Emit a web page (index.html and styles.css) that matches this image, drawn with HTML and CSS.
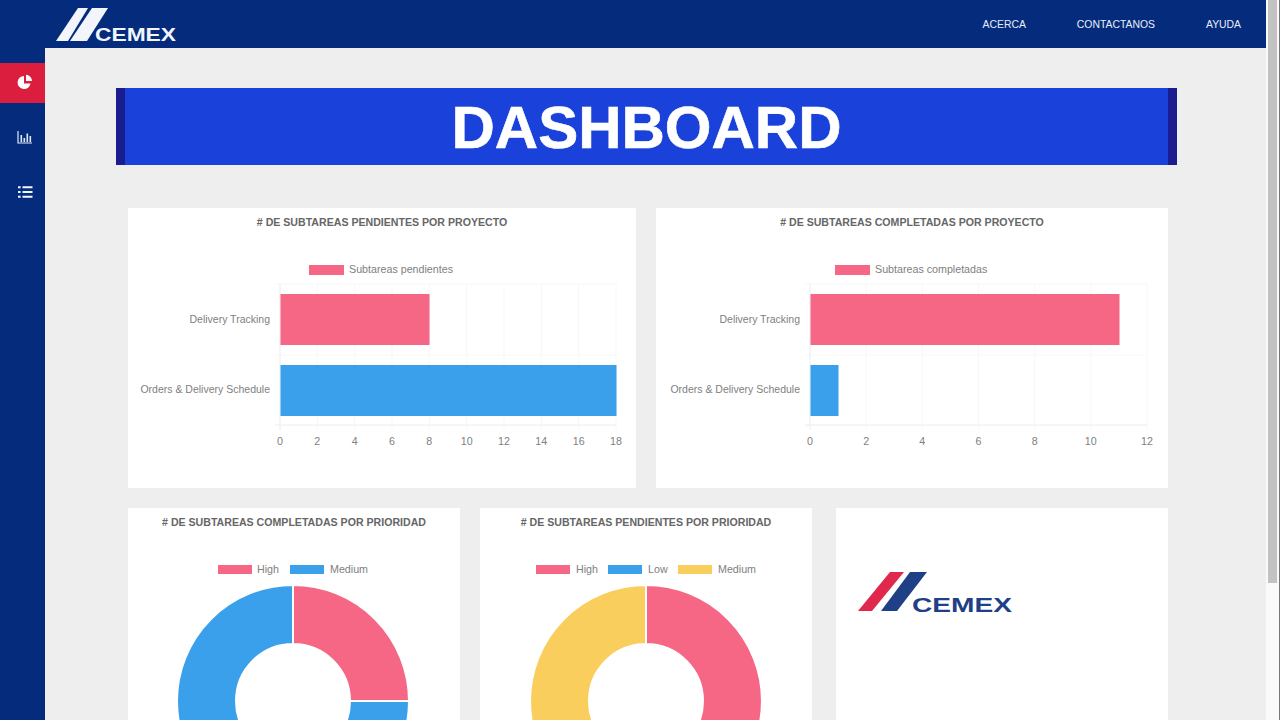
FILE: index.html

```html
<!DOCTYPE html>
<html lang="es">
<head>
    <meta charset="UTF-8">
    <title>Cemex | Dashboard</title>
    <meta name="viewport" content="width=device-width, initial-scale=1">
    <link rel="stylesheet" href="styles.css">
</head>
<body>
    <div class="app">
        <div class="page">
            <header class="topbar">
                <svg class="logo-top" viewBox="0 0 124 42" width="124" height="42" role="img" aria-label="Cemex">
                    <polygon points="2,35 24,2 34,2 14,35" fill="#f2f6fc"/>
                    <polygon points="16,35 38,2 54,2 33,35" fill="#f2f6fc"/>
                    <text x="41" y="35" class="logo-word" font-size="18" textLength="81" lengthAdjust="spacingAndGlyphs" fill="#f2f6fc">CEMEX</text>
                </svg>
                <nav class="topnav">
                    <a href="#">ACERCA</a>
                    <a href="#">CONTACTANOS</a>
                    <a href="#">AYUDA</a>
                </nav>
            </header>

            <div class="body-row">
                <aside class="sidebar">
                    <a class="side-item active" href="#">
                        <svg viewBox="0 0 16 16" width="16" height="16">
                            <path d="M7 2a6.500 6.500 0 1 0 6.500 7.500H7z" fill="#fff"/>
                            <path d="M9 .8a6.200 6.200 0 0 1 6 6.200H9z" fill="#fff"/>
                        </svg>
                    </a>
                    <a class="side-item" href="#">
                        <svg viewBox="0 0 16 16" width="16" height="16">
                            <path d="M1 2v12h14" fill="none" stroke="#dfe8f7" stroke-width="1.200"/>
                            <path d="M3.500 6h1.600v7H3.500zM6.500 9h1.600v4H6.500zM9.500 4.500h1.600V13H9.500zM12.500 7h1.600v6h-1.600z" fill="#dfe8f7"/>
                        </svg>
                    </a>
                    <a class="side-item" href="#">
                        <svg viewBox="0 0 16 16" width="16" height="16">
                            <path d="M5.500 2.300h10v2h-10zM5.500 7h10v2h-10zM5.500 11.700h10v2h-10z" fill="#f2f6fc"/>
                            <path d="M1 2.300h2.600v2H1zM1 7h2.600v2H1zM1 11.700h2.600v2H1z" fill="#f2f6fc"/>
                        </svg>
                    </a>
                </aside>

                <main class="content">
                    <h1 class="banner">DASHBOARD</h1>

                    <section class="charts">
                        <div class="row-top">
                            <div class="card">
                                <h2># DE SUBTAREAS PENDIENTES POR PROYECTO</h2>
                                <svg class="chart" width="508" height="259" viewBox="0 0 508 259">
                                    <g class="grid">
                                        <path d="M189.300 55V201M226.700 55V201M264 55V201M301.300 55V201M338.700 55V201M376 55V201M413.300 55V201M450.700 55V201M488 55V201"/>
                                        <path d="M147 55H488M147 126H488"/>
                                    </g>
                                    <path class="axis" d="M147 196H488M152 55V201"/>
                                    <rect class="pink" x="181" y="36" width="35" height="10"/>
                                    <text x="221" y="44">Subtareas pendientes</text>
                                    <rect class="pink" x="152.500" y="65" width="149" height="51"/>
                                    <rect class="blue" x="152.500" y="136" width="336" height="51"/>
                                    <g class="cat">
                                        <text x="142" y="94">Delivery Tracking</text>
                                        <text x="142" y="164">Orders &amp; Delivery Schedule</text>
                                    </g>
                                    <g class="tick">
                                        <text x="152" y="216">0</text>
                                        <text x="189.300" y="216">2</text>
                                        <text x="226.700" y="216">4</text>
                                        <text x="264" y="216">6</text>
                                        <text x="301.300" y="216">8</text>
                                        <text x="338.700" y="216">10</text>
                                        <text x="376" y="216">12</text>
                                        <text x="413.300" y="216">14</text>
                                        <text x="450.700" y="216">16</text>
                                        <text x="488" y="216">18</text>
                                    </g>
                                </svg>
                            </div>
                            <div class="card">
                                <h2># DE SUBTAREAS COMPLETADAS POR PROYECTO</h2>
                                <svg class="chart" width="512" height="259" viewBox="0 0 512 259">
                                    <g class="grid">
                                        <path d="M210.200 55V201M266.300 55V201M322.500 55V201M378.700 55V201M434.800 55V201M491 55V201"/>
                                        <path d="M149 55H491M149 126H491"/>
                                    </g>
                                    <path class="axis" d="M149 196H491M154 55V201"/>
                                    <rect class="pink" x="179" y="36" width="35" height="10"/>
                                    <text x="219" y="44">Subtareas completadas</text>
                                    <rect class="pink" x="154.500" y="65" width="309" height="51"/>
                                    <rect class="blue" x="154.500" y="136" width="28" height="51"/>
                                    <g class="cat">
                                        <text x="144" y="94">Delivery Tracking</text>
                                        <text x="144" y="164">Orders &amp; Delivery Schedule</text>
                                    </g>
                                    <g class="tick">
                                        <text x="154" y="216">0</text>
                                        <text x="210.200" y="216">2</text>
                                        <text x="266.300" y="216">4</text>
                                        <text x="322.500" y="216">6</text>
                                        <text x="378.700" y="216">8</text>
                                        <text x="434.800" y="216">10</text>
                                        <text x="491" y="216">12</text>
                                    </g>
                                </svg>
                            </div>
                        </div>

                        <div class="row-bottom">
                            <div class="card">
                                <h2># DE SUBTAREAS COMPLETADAS POR PRIORIDAD</h2>
                                <svg class="chart" width="332" height="299" viewBox="0 0 332 299">
                                    <rect class="pink" x="90" y="36" width="34" height="9"/>
                                    <text x="129" y="44">High</text>
                                    <rect class="blue" x="162" y="36" width="34" height="9"/>
                                    <text x="202" y="44">Medium</text>
                                    <path class="pink slice" d="M165 56A116 116 0 0 1 281 172H222A57 57 0 0 0 165 115Z"/>
                                    <path class="blue slice" d="M281 172A116 116 0 1 1 165 56V115A57 57 0 1 0 222 172Z"/>
                                </svg>
                            </div>
                            <div class="card">
                                <h2># DE SUBTAREAS PENDIENTES POR PRIORIDAD</h2>
                                <svg class="chart" width="332" height="299" viewBox="0 0 332 299">
                                    <rect class="pink" x="56" y="36" width="34" height="9"/>
                                    <text x="96" y="44">High</text>
                                    <rect class="blue" x="128" y="36" width="34" height="9"/>
                                    <text x="168" y="44">Low</text>
                                    <rect class="yellow" x="198" y="36" width="34" height="9"/>
                                    <text x="238" y="44">Medium</text>
                                    <path class="pink slice" d="M166 56A116 116 0 0 1 166 288V229A57 57 0 0 0 166 115Z"/>
                                    <path class="yellow slice" d="M166 288A116 116 0 0 1 166 56V115A57 57 0 0 0 166 229Z"/>
                                </svg>
                            </div>
                            <div class="card logo-card">
                                <svg viewBox="0 0 156 50" width="156" height="50" role="img" aria-label="Cemex">
                                    <polygon points="1,40 33,1 47,1 15,40" fill="#e0274c"/>
                                    <polygon points="24,40 53,1 70,1 40,40" fill="#1f3f86"/>
                                    <text x="55" y="41" class="logo-word" font-size="21" textLength="100" lengthAdjust="spacingAndGlyphs" fill="#1f3f86">CEMEX</text>
                                </svg>
                            </div>
                        </div>
                    </section>
                </main>
            </div>
        </div>

        <div class="scrollbar"><div class="scroll-thumb"></div></div>
    </div>
</body>
</html>
```

FILE: styles.css

```css
body {
    margin: 0;
    font-family: 'Liberation Sans', Arial, sans-serif;
    background: #eeeeef;
}
.app {
    display: flex;
    width: 1280px;
    height: 720px;
    overflow: hidden;
}
.page {
    width: 1266px;
    flex: none;
}
.topbar {
    display: flex;
    justify-content: space-between;
    height: 48px;
    background: #052c7c;
}
.logo-top {
    margin: 6px 0 0 54px;
}
.logo-word {
    font-family: 'Liberation Sans', Arial, sans-serif;
    font-weight: bold;
}
.topnav {
    display: flex;
    align-items: center;
    gap: 51px;
    padding-right: 25px;
}
.topnav a {
    color: #e8eefa;
    font-size: 10.400px;
    text-decoration: none;
}
.body-row {
    display: flex;
}
.sidebar {
    display: flex;
    flex-direction: column;
    gap: 15px;
    width: 45px;
    height: 672px;
    padding-top: 15px;
    box-sizing: border-box;
    background: #052c7c;
    flex: none;
}
.side-item {
    display: flex;
    align-items: center;
    justify-content: center;
    height: 37px;
    padding: 0 0 3px 5px;
}
.side-item.active {
    background: #dc1e3e;
}
.content {
    flex: 1;
    padding: 40px 89px 0 71px;
}
.banner {
    margin: 0;
    height: 77px;
    border-left: 9px solid #1b1c8f;
    border-right: 9px solid #1b1c8f;
    background: #1a41d9;
    color: #fff;
    font-size: 60px;
    line-height: 79px;
    text-align: center;
    -webkit-text-stroke: 0.6px #fff;
}
.charts {
    margin: 43px 9px 0 12px;
}
.row-top {
    display: grid;
    grid-template-columns: 508px 512px;
    column-gap: 20px;
    height: 280px;
}
.row-bottom {
    display: grid;
    grid-template-columns: 332px 332px 336px;
    column-gap: 20px;
    margin-top: 20px;
    height: 320px;
}
.card {
    background: #fff;
    overflow: hidden;
}
.card h2 {
    margin: 0;
    padding-top: 7px;
    height: 14px;
    color: #666;
    font-size: 10.600px;
    line-height: 14px;
    text-align: center;
}
.chart {
    display: block;
    font-size: 10.700px;
    fill: #808080;
}
.cat text {
    font-size: 10.500px;
    text-anchor: end;
}
.tick text {
    text-anchor: middle;
}
.grid path {
    fill: none;
    stroke: #f7f7f7;
}
.axis {
    fill: none;
    stroke: #ececec;
}
.pink {
    fill: #f56785;
}
.blue {
    fill: #3aa0ec;
}
.yellow {
    fill: #f9ce5c;
}
.slice {
    stroke: #fff;
    stroke-width: 2;
}
.logo-card {
    margin-left: 4px;
    padding: 63px 0 0 21px;
}
.scrollbar {
    flex: 1;
    display: flex;
    justify-content: center;
    height: 720px;
    background: #fafafa;
    border-right: 1px solid #777;
}
.scroll-thumb {
    width: 9px;
    height: 583px;
    background: #c2c2c2;
}
```
